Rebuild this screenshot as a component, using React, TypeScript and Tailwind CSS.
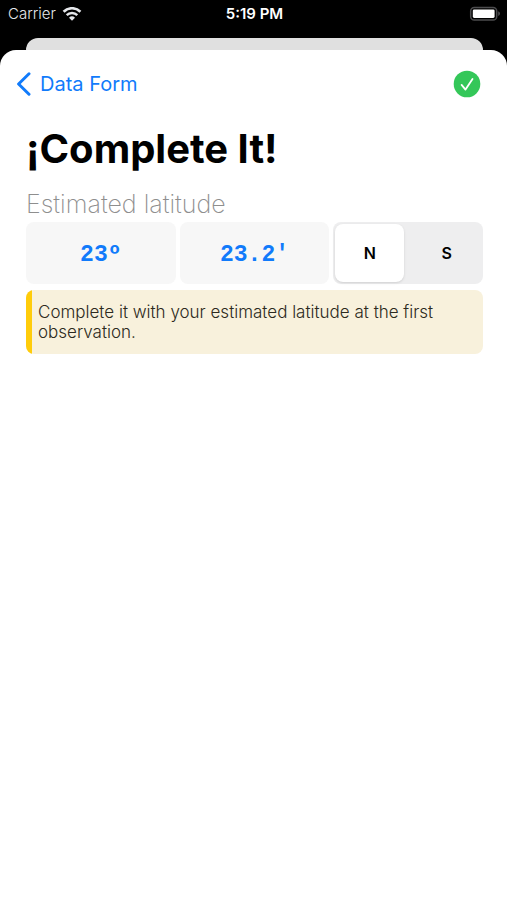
import React, { useState } from 'react';
import { clsx } from 'clsx';

type Hemisphere = 'N' | 'S';

const HEMISPHERES: Hemisphere[] = ['N', 'S'];

function WifiIcon() {
  return (
    <svg viewBox="0 0 20 14" className="w-5 h-3.5" fill="none" aria-hidden="true">
      <path d="M1.6 4.7a12 12 0 0 1 16.8 0" stroke="currentColor" strokeWidth="2.7" />
      <path d="M4.7 8.1a7.6 7.6 0 0 1 10.6 0" stroke="currentColor" strokeWidth="2.5" />
      <path d="M7 10.7a4.3 4.3 0 0 1 6 0l-3 3z" fill="currentColor" />
    </svg>
  );
}

function BatteryIcon() {
  return (
    <svg viewBox="0 0 32 16" className="w-8 h-4" fill="none" aria-hidden="true">
      <rect x="1.7" y="1.4" width="26" height="12.6" rx="3.6" stroke="#4c4c4e" strokeWidth="1.5" />
      <rect x="3.8" y="3.4" width="21.8" height="8.6" rx="1.4" fill="#fff" />
      <path d="M29.2 5.2c1.1.4 1.8 1.3 1.8 2.4s-.7 2-1.8 2.4z" fill="#4c4c4e" />
    </svg>
  );
}

function StatusBar() {
  return (
    <div className="grid grid-cols-3 items-center h-7 pl-2 pr-1.5 text-[15px] text-white">
      <div className="flex items-center gap-1.5 text-gray-200">
        <span className="font-light">Carrier</span>
        <WifiIcon />
      </div>
      <div className="text-center font-semibold">5:19 PM</div>
      <div className="flex justify-end">
        <BatteryIcon />
      </div>
    </div>
  );
}

function NavBar({ onDone }: { onDone?: () => void }) {
  return (
    <nav className="flex items-center justify-between h-17 pl-4 pr-6.5">
      <a href="#data-form" className="flex items-center gap-2 text-xl text-[#117bfb]">
        <svg viewBox="0 0 16 24" className="w-4 h-6" fill="none" aria-hidden="true">
          <path
            d="M13 1.8 2.6 12 13 22.2"
            stroke="currentColor"
            strokeWidth="3"
            strokeLinecap="round"
            strokeLinejoin="round"
          />
        </svg>
        Data Form
      </a>
      <button type="button" aria-label="Done" onClick={onDone}>
        <svg viewBox="0 0 28 28" className="w-7 h-7" fill="none" aria-hidden="true">
          <circle cx="14" cy="14" r="13.3" fill="#34c759" />
          <path
            d="m8.6 14.9 3.9 4.7 7-10.6"
            stroke="#fff"
            strokeWidth="1.8"
            strokeLinecap="round"
            strokeLinejoin="round"
          />
        </svg>
      </button>
    </nav>
  );
}

function ValueButton({ label, value }: { label: string; value: string }) {
  return (
    <button
      type="button"
      aria-label={label}
      className="rounded-lg bg-[#f7f7f7] pt-1 font-['Liberation_Mono',monospace] text-[23px] font-bold text-[#117bfb]"
    >
      {value}
    </button>
  );
}

export default function App() {
  const [hemisphere, setHemisphere] = useState<Hemisphere>('N');

  return (
    <div className="flex flex-col min-h-screen bg-black font-['Inter',sans-serif]">
      <StatusBar />

      {/* Edge of the view behind the sheet */}
      <div className="h-3 mt-2.5 ml-6.5 mr-6 rounded-t-xl bg-[#e0e0e0]" />

      <main className="flex-1 rounded-t-2xl bg-white">
        <NavBar />

        <div className="pl-6.5 pr-6">
          <h1 className="text-[40px] leading-[62px] font-bold text-black">¡Complete It!</h1>

          <h2 className="mt-2 mb-0.5 text-[25px] leading-8 font-extralight text-[#8e8e8e]">
            Estimated latitude
          </h2>

          <div className="grid grid-cols-3 gap-1 h-[62px]">
            <ValueButton label="Degrees" value="23º" />
            <ValueButton label="Minutes" value="23.2'" />

            <div
              role="radiogroup"
              aria-label="Hemisphere"
              className="grid grid-cols-2 gap-2 rounded-lg bg-[#eeeeef] p-0.5"
            >
              {HEMISPHERES.map((item) => (
                <label
                  key={item}
                  className={clsx(
                    'relative flex items-center justify-center rounded-lg text-base font-semibold text-black cursor-pointer',
                    hemisphere === item && 'bg-white shadow'
                  )}
                >
                  <input
                    type="radio"
                    name="hemisphere"
                    value={item}
                    checked={hemisphere === item}
                    onChange={() => setHemisphere(item)}
                    className="absolute inset-0 appearance-none cursor-pointer"
                  />
                  {item}
                </label>
              ))}
            </div>
          </div>

          <div className="mt-1.5 overflow-hidden rounded-lg">
            <p className="border-l-6 border-[#ffcc0a] bg-[#f8f1dc] py-3 pl-1.5 pr-3 text-[17px] leading-5 font-light text-[#2c2a20]">
              Complete it with your estimated latitude at the first observation.
            </p>
          </div>
        </div>
      </main>
    </div>
  );
}
